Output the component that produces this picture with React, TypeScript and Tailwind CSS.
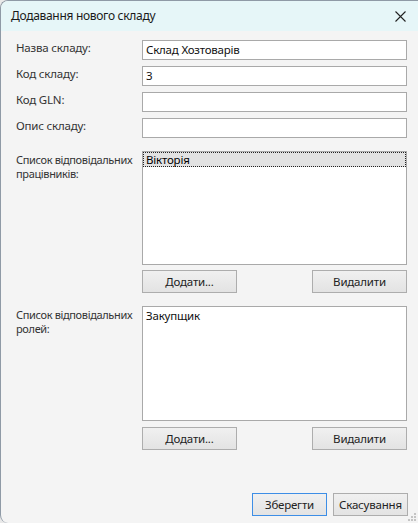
import React from "react";

const font = { fontFamily: '"Noto Sans", "Open Sans", sans-serif' };

function Btn({ children }: { children: React.ReactNode }) {
  return (
    <div className="flex h-[23px] w-[95px] items-center justify-center border border-[#adadad] bg-gradient-to-b from-[#f0f0f0] to-[#e3e3e3] text-[11.5px] tracking-[-0.2px] text-[#222]">
      {children}
    </div>
  );
}

function Field({ label, value = "" }: { label: string; value?: string }) {
  return (
    <div className="flex h-[20px] items-start">
      <div className="w-[126px] whitespace-nowrap text-[11.5px] leading-[16px] tracking-[-0.2px] text-[#333]">{label}</div>
      <div className="flex h-[20px] w-[265px] items-center border border-[#a9a9a9] bg-white px-[3px] text-[11.5px] tracking-[-0.2px] text-[#111]">
        {value}
      </div>
    </div>
  );
}

export default function App() {
  return (
    <div className="h-[523px] w-[418px] overflow-hidden bg-[#e9e9e9]" style={font}>
      <div className="relative flex h-[523px] w-[418px] flex-col overflow-hidden rounded-l-[8px] border-l border-t border-[#8f9aa6] bg-[#f4f4f4]">
        <div className="flex h-[30px] shrink-0 items-center justify-between bg-[#e6f6f8] pl-[10px] pr-[12px]">
          <span className="text-[12px] tracking-[-0.3px] text-[#1a1a1a]">Додавання нового складу</span>
          <svg width="11" height="11" viewBox="0 0 11 11">
            <path d="M0.5 0.5 L10.5 10.5 M10.5 0.5 L0.5 10.5" stroke="#222" strokeWidth="1.1" fill="none" />
          </svg>
        </div>

        <div className="flex flex-col pl-[15px] pt-[9px]">
          <div className="flex flex-col gap-[6px]">
            <Field label="Назва складу:" value="Склад Хозтоварів" />
            <Field label="Код складу:" value="3" />
            <Field label="Код GLN:" />
            <Field label="Опис складу:" />
          </div>

          <div className="mt-[13px] flex items-start">
            <div className="w-[126px] whitespace-nowrap pt-[2px] text-[11px] leading-[14px] tracking-[-0.35px] text-[#333]">
              Список відповідальних
              <br />
              працівників:
            </div>
            <div className="flex w-[265px] flex-col">
              <div className="h-[114px] border border-[#a9a9a9] bg-white">
                <div className="h-[15px] border border-dotted border-[#222] bg-[#e2e2e2] pl-[2px] text-[11.5px] leading-[13px] tracking-[-0.2px] text-black">
                  Вікторія
                </div>
              </div>
              <div className="mt-[5px] flex justify-between">
                <Btn>Додати...</Btn>
                <Btn>Видалити</Btn>
              </div>
            </div>
          </div>

          <div className="mt-[13px] flex items-start">
            <div className="w-[126px] whitespace-nowrap pt-[2px] text-[11px] leading-[14px] tracking-[-0.35px] text-[#333]">
              Список відповідальних
              <br />
              ролей:
            </div>
            <div className="flex w-[265px] flex-col">
              <div className="h-[115px] border border-[#a9a9a9] bg-white px-[3px] pt-[1px] text-[11.5px] leading-[16px] tracking-[-0.2px] text-[#111]">
                Закупщик
              </div>
              <div className="mt-[6px] flex justify-between">
                <Btn>Додати...</Btn>
                <Btn>Видалити</Btn>
              </div>
            </div>
          </div>
        </div>

        <div className="mt-auto mb-[7px] flex justify-end gap-[6px] pr-[10px]">
          <div className="flex h-[23px] w-[75px] items-center justify-center border border-[#3d8ee6] bg-gradient-to-b from-[#f0f0f0] to-[#e3e3e3] text-[11.5px] tracking-[-0.2px] text-[#222]">
            Зберегти
          </div>
          <div className="flex h-[23px] w-[75px] items-center justify-center border border-[#adadad] bg-gradient-to-b from-[#f0f0f0] to-[#e3e3e3] text-[11.5px] tracking-[-0.2px] text-[#222]">
            Скасування
          </div>
        </div>

        <svg className="absolute bottom-[1px] right-[1px]" width="10" height="10" viewBox="0 0 10 10">
          <g fill="#c4c4c4">
            <rect x="7" y="1" width="2" height="2" />
            <rect x="4" y="4" width="2" height="2" />
            <rect x="7" y="4" width="2" height="2" />
            <rect x="1" y="7" width="2" height="2" />
            <rect x="4" y="7" width="2" height="2" />
            <rect x="7" y="7" width="2" height="2" />
          </g>
        </svg>
      </div>
    </div>
  );
}
